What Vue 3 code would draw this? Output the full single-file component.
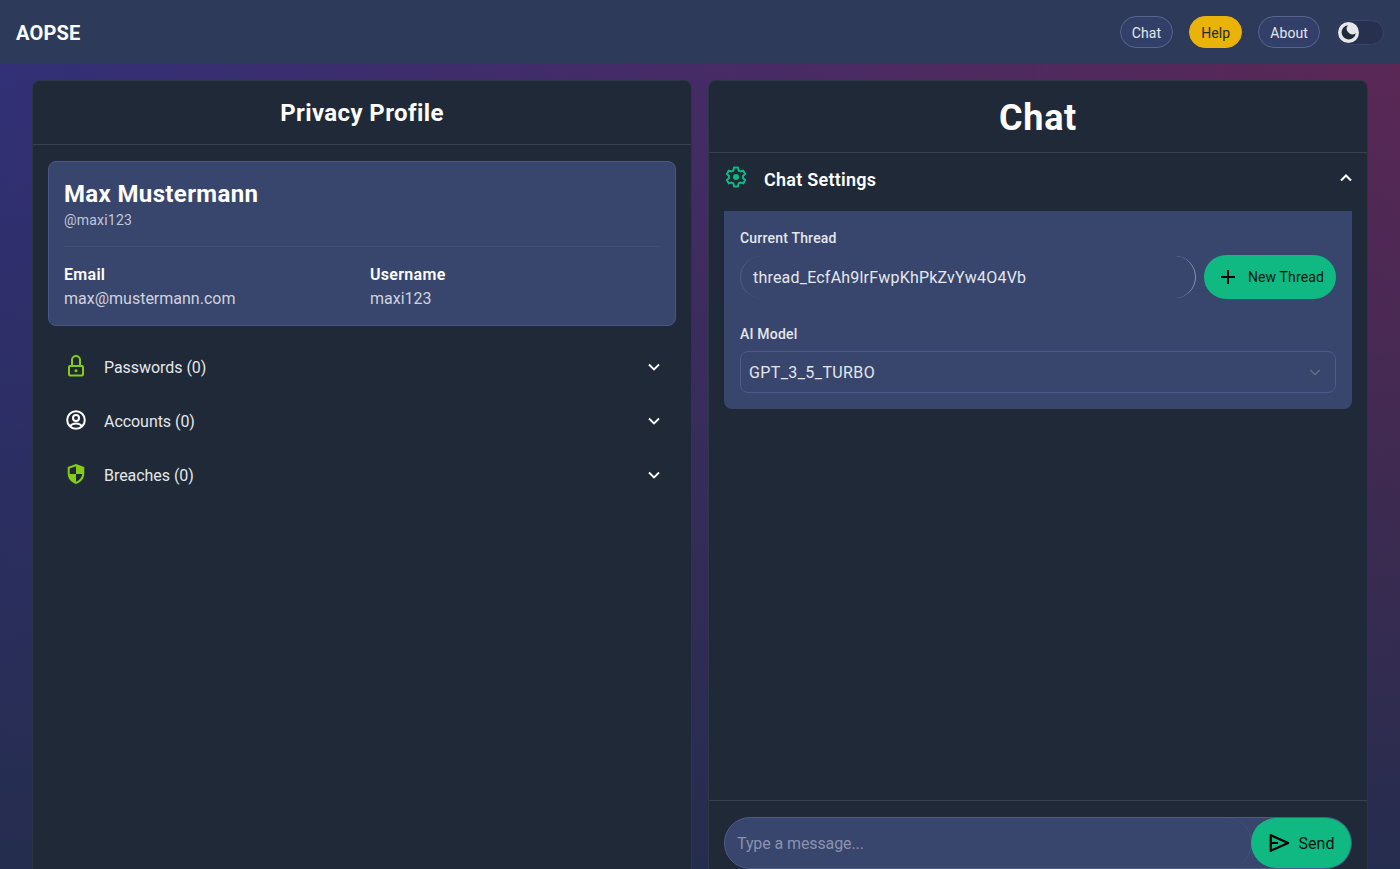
<template>
  <div class="page">
    <header class="navbar">
      <span class="brand">AOPSE</span>
      <nav class="nav-right">
        <button class="nav-btn">Chat</button>
        <button class="nav-btn help">Help</button>
        <button class="nav-btn">About</button>
        <span class="theme-toggle">
          <span class="knob">
            <svg viewBox="0 0 24 24" width="18" height="18"><path d="M21 13.500A9.500 9.500 0 1 1 10.500 3a7.500 7.500 0 0 0 10.500 10.500z" fill="#1f2937" /></svg>
          </span>
        </span>
      </nav>
    </header>

    <main class="content">
      <section class="card">
        <div class="card-head">
          <h2>Privacy Profile</h2>
        </div>
        <div class="profile-body">
          <div class="user-box">
            <div class="user-top">
              <div class="user-name">Max Mustermann</div>
              <div class="user-handle">@maxi123</div>
            </div>
            <div class="user-grid">
              <div v-for="f in userFields" :key="f.label">
                <div class="field-label">{{ f.label }}</div>
                <div class="field-value">{{ f.value }}</div>
              </div>
            </div>
          </div>

          <div class="acc-list">
            <div class="acc-row" v-for="row in rows" :key="row.label">
              <svg v-if="row.icon === 'lock'" class="acc-icon" viewBox="0 0 24 24" fill="none" stroke="#84cc16" stroke-width="2">
                <rect x="5" y="11" width="14" height="9.500" rx="1" />
                <path d="M8 11V5a4 4 0 0 1 8 0v6" />
                <circle cx="12" cy="15.700" r="1.500" fill="#84cc16" stroke="none" />
              </svg>
              <svg v-else-if="row.icon === 'user'" class="acc-icon" viewBox="0 0 24 24" fill="none" stroke="#fff" stroke-width="2">
                <circle cx="12" cy="11" r="8.800" />
                <circle cx="12" cy="9" r="3" />
                <path d="M6 17.500c1.200-2.100 3.300-3 6-3s4.800.9 6 3" />
              </svg>
              <svg v-else class="acc-icon" viewBox="0 0 24 24">
                <path d="M12 1l8.300 3v6.500c0 4.700-3.300 8.900-8.300 10.500-5-1.600-8.300-5.800-8.300-10.500V4z" fill="#84cc16" />
                <path d="M12 3.300v7.700H5.700V5.500zM12 11h6.300c-.5 3.600-2.900 6.500-6.300 7.800z" fill="#1f2937" />
              </svg>
              <span class="acc-label">{{ row.label }}</span>
              <svg class="chev" viewBox="0 0 24 24" fill="none" stroke="#fff" stroke-width="2.200"><path d="M6 9l6 6 6-6" /></svg>
            </div>
          </div>
        </div>
      </section>

      <section class="card">
        <div class="chat-head">
          <h1>Chat</h1>
        </div>
        <div class="settings-row">
          <svg class="acc-icon" viewBox="0 0 24 24" fill="none" stroke="#10b981" stroke-width="2" stroke-linejoin="round">
            <path :d="gearPath" />
            <circle cx="12" cy="12" r="3" fill="#10b981" stroke="none" />
          </svg>
          <span class="settings-title">Chat Settings</span>
          <svg class="chev up" viewBox="0 0 24 24" fill="none" stroke="#fff" stroke-width="2.500"><path d="M6 15l6-6 6 6" /></svg>
        </div>

        <div class="settings-box">
          <label class="small-label">Current Thread</label>
          <div class="thread-row">
            <div class="thread-input">thread_EcfAh9lrFwpKhPkZvYw4O4Vb</div>
            <button class="new-thread">
              <svg viewBox="0 0 24 24" width="24" height="24" fill="none" stroke="#000" stroke-width="2"><path d="M12 5v14M5 12h14" /></svg>
              <span>New Thread</span>
            </button>
          </div>
          <label class="small-label model-label">AI Model</label>
          <div class="model-select">
            <span>GPT_3_5_TURBO</span>
            <svg viewBox="0 0 24 24" width="16" height="16" fill="none" stroke="#6b7280" stroke-width="2"><path d="M5 9l7 7 7-7" /></svg>
          </div>
        </div>

        <div class="spacer"></div>

        <div class="composer">
          <div class="composer-box">
            <div class="composer-input">
              <span class="placeholder">Type a message...</span>
            </div>
            <button class="send">
              <svg viewBox="0 0 24 24" width="22" height="22" fill="none" stroke="#000" stroke-width="2.400" stroke-linejoin="round"><path d="M3 3.500l19 8.500-19 8.500zM3 12h8" /></svg>
              <span>Send</span>
            </button>
          </div>
        </div>
      </section>
    </main>
  </div>
</template>

<script setup>
const userFields = [
  { label: 'Email', value: 'max@mustermann.com' },
  { label: 'Username', value: 'maxi123' }
]

const rows = [
  { icon: 'lock', label: 'Passwords (0)' },
  { icon: 'user', label: 'Accounts (0)' },
  { icon: 'shield', label: 'Breaches (0)' }
]

// six tooth cog, one tooth pointing straight up
const gearPath = (() => {
  const pt = (r, deg) => {
    const a = (deg * Math.PI) / 180
    return `${(12 + r * Math.cos(a)).toFixed(2)} ${(12 + r * Math.sin(a)).toFixed(2)}`
  }
  const pts = []
  for (let i = 0; i < 6; i++) {
    const c = -90 + i * 60
    pts.push(pt(7, c - 22), pt(9.6, c - 12), pt(9.6, c + 12), pt(7, c + 22))
  }
  return `M${pts.join('L')}z`
})()
</script>

<style>
html, body {
  margin: 0;
  overflow: hidden;
}
</style>

<style scoped>
.page {
  height: 869px;
  overflow: hidden;
  font-family: "Roboto", "Liberation Sans", sans-serif;
  color: #fff;
  background:
    linear-gradient(to bottom, rgba(37, 45, 78, 0) 0%, rgba(37, 45, 78, 1) 100%),
    linear-gradient(to right, #33307a, #5f2756);
}
button {
  font-family: inherit;
  border: none;
}
.navbar {
  height: 64px;
  background: #2d3a5a;
  display: flex;
  align-items: center;
  justify-content: space-between;
  padding: 0 16px;
}
.brand {
  font-size: 20px;
  font-weight: 700;
  letter-spacing: .2px;
  padding-top: 2px;
}
.nav-right {
  display: flex;
  align-items: center;
  gap: 16px;
}
.nav-btn {
  height: 32px;
  padding: 2px 11px 0;
  border-radius: 16px;
  border: 1px solid #55658f;
  background: #323f68;
  color: #e5e7eb;
  font-size: 14px;
  letter-spacing: .1px;
}
.nav-btn.help {
  background: #eab308;
  border-color: #eab308;
  color: #1f2937;
}
.theme-toggle {
  width: 48px;
  height: 25px;
  box-sizing: border-box;
  border-radius: 13px;
  background: #27304f;
  border: 1px solid #374470;
  display: flex;
  align-items: center;
  padding-left: 1px;
}
.knob {
  width: 21px;
  height: 21px;
  border-radius: 50%;
  background: #e5e7eb;
  display: flex;
  align-items: center;
  justify-content: center;
}
.content {
  display: grid;
  grid-template-columns: 1fr 1fr;
  gap: 16px;
  padding: 16px 32px 0;
}
.card {
  height: 820px;
  box-sizing: border-box;
  background: #1f2937;
  border: 1px solid #2c3647;
  border-radius: 8px;
  display: flex;
  flex-direction: column;
}
.card-head {
  height: 63px;
  border-bottom: 1px solid #374151;
  display: flex;
  align-items: center;
  justify-content: center;
}
.card-head h2 {
  margin: 0;
  font-size: 24px;
  font-weight: 700;
  letter-spacing: .4px;
}
.profile-body {
  padding: 16px 15px;
}
.user-box {
  background: #38456d;
  border: 1px solid #4a5784;
  border-radius: 8px;
  padding: 16px 15px;
  height: 165px;
  box-sizing: border-box;
}
.user-top {
  padding-bottom: 16px;
  border-bottom: 1px solid #414d77;
}
.user-name {
  font-size: 24px;
  font-weight: 700;
  line-height: 32px;
  letter-spacing: .36px;
}
.user-handle {
  font-size: 14px;
  line-height: 20px;
  color: #c3c8d6;
  letter-spacing: .2px;
}
.user-grid {
  display: grid;
  grid-template-columns: 1fr 1fr;
  gap: 16px;
  margin-top: 16px;
}
.field-label {
  font-size: 16px;
  font-weight: 600;
  line-height: 24px;
  letter-spacing: .3px;
}
.field-value {
  font-size: 16px;
  line-height: 24px;
  color: #cfd3de;
}
.acc-list {
  margin-top: 14px;
}
.acc-row {
  height: 54px;
  display: flex;
  align-items: center;
  padding: 0 12px 0 16px;
}
.acc-icon {
  width: 24px;
  height: 24px;
  flex: none;
}
.acc-label {
  margin-left: 16px;
  font-size: 16px;
  color: #e5e7eb;
  letter-spacing: -.05px;
  flex: 1;
}
.chev {
  width: 20px;
  height: 20px;
  flex: none;
}
.chev.up {
  margin-top: 2px;
}
.chat-head {
  height: 71px;
  border-bottom: 1px solid #374151;
  display: flex;
  align-items: center;
  justify-content: center;
}
.chat-head h1 {
  margin: 0;
  font-size: 36px;
  font-weight: 700;
  letter-spacing: .7px;
  position: relative;
  top: 1px;
}
.settings-row {
  height: 58px;
  box-sizing: border-box;
  display: flex;
  align-items: center;
  padding: 0 11px 10px 15px;
  flex: none;
}
.settings-title {
  margin-left: 16px;
  padding-top: 4px;
  font-size: 18px;
  font-weight: 600;
  letter-spacing: .25px;
  flex: 1;
}
.settings-box {
  margin: 0 15px;
  padding: 16px;
  height: 198px;
  box-sizing: border-box;
  background: #38456d;
  border-radius: 0 0 8px 8px;
  flex: none;
}
.small-label {
  display: block;
  font-size: 14px;
  font-weight: 500;
  line-height: 22px;
  color: #e5e7eb;
  letter-spacing: .2px;
}
.thread-row {
  display: flex;
  gap: 8px;
  margin-top: 6px;
}
.thread-input {
  flex: 1;
  height: 42px;
  margin-top: 1px;
  border-radius: 21px;
  padding-left: 12px;
  display: flex;
  align-items: center;
  font-size: 16px;
  letter-spacing: .2px;
  color: #e5e7eb;
  border-left: 1px solid #535f80;
  border-right: 1px solid #8b94ad;
  box-sizing: border-box;
}
.new-thread {
  height: 44px;
  width: 132px;
  border-radius: 22px;
  background: #10b981;
  color: #06140f;
  display: flex;
  align-items: center;
  justify-content: center;
  gap: 8px;
  font-size: 14px;
  letter-spacing: .15px;
  padding: 0;
}
.model-label {
  margin-top: 24px;
}
.model-select {
  height: 42px;
  margin-top: 6px;
  box-sizing: border-box;
  border: 1px solid #4e5b8a;
  border-radius: 8px;
  padding: 0 12px 0 8px;
  display: flex;
  align-items: center;
  justify-content: space-between;
  font-size: 16px;
  letter-spacing: .4px;
  color: #e5e7eb;
}
.spacer {
  flex: 1;
}
.composer {
  border-top: 1px solid #374151;
  padding: 16px 15px 0;
  height: 82px;
  flex: none;
  box-sizing: content-box;
}
.composer-box {
  height: 52px;
  box-sizing: border-box;
  border-radius: 26px;
  border: 1px solid #4e5b8a;
  background: #38456d;
  display: flex;
  align-items: center;
  justify-content: space-between;
}
.composer-input {
  flex: 1;
  height: 50px;
  margin-right: -1px;
  padding-left: 12px;
  border-radius: 25px;
  border-right: 1px solid #45527a;
  display: flex;
  align-items: center;
}
.placeholder {
  font-size: 16px;
  letter-spacing: -.1px;
  color: #8a93ad;
}
.send {
  width: 100px;
  height: 50px;
  flex: none;
  border-radius: 25px;
  background: #10b981;
  color: #06140f;
  display: flex;
  align-items: center;
  justify-content: center;
  gap: 9px;
  font-size: 16px;
  padding: 0;
}
</style>
